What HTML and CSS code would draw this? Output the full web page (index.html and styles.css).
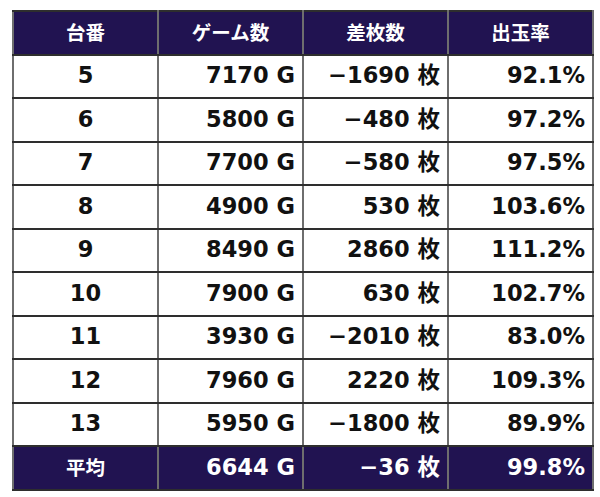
FILE: index.html
```html
<!DOCTYPE html>
<html lang="ja">
<head>
<meta charset="utf-8">
<link rel="stylesheet" href="styles.css">
</head>
<body>
<div class="wrap">
<table class="data">
<colgroup><col><col><col><col></colgroup>
<thead>
<tr><th>台番</th><th>ゲーム数</th><th>差枚数</th><th>出玉率</th></tr>
</thead>
<tbody>
<tr><td class="c">5</td><td>7170 G</td><td>−1690 枚</td><td>92.1%</td></tr>
<tr><td class="c">6</td><td>5800 G</td><td>−480 枚</td><td>97.2%</td></tr>
<tr><td class="c">7</td><td>7700 G</td><td>−580 枚</td><td>97.5%</td></tr>
<tr><td class="c">8</td><td>4900 G</td><td>530 枚</td><td>103.6%</td></tr>
<tr><td class="c">9</td><td>8490 G</td><td>2860 枚</td><td>111.2%</td></tr>
<tr><td class="c">10</td><td>7900 G</td><td>630 枚</td><td>102.7%</td></tr>
<tr><td class="c">11</td><td>3930 G</td><td>−2010 枚</td><td>83.0%</td></tr>
<tr><td class="c">12</td><td>7960 G</td><td>2220 枚</td><td>109.3%</td></tr>
<tr><td class="c">13</td><td>5950 G</td><td>−1800 枚</td><td>89.9%</td></tr>
</tbody>
<tfoot>
<tr><th class="lbl">平均</th><td>6644 G</td><td>−36 枚</td><td>99.8%</td></tr>
</tfoot>
</table>
</div>
</body>
</html>
```
FILE: styles.css
```css
html, body {
  margin: 0;
  padding: 0;
  background: #ffffff;
}
.wrap {
  padding: 10px 0 0 12px;
}
.data {
  border-collapse: collapse;
  table-layout: fixed;
  width: 580px;
  font-family: "DejaVu Sans", "Noto Sans CJK JP", sans-serif;
  font-weight: bold;
  color: #111;
  border: 2px solid #6e6e6e;
}
.data col {
  width: 145px;
}
.data tr {
  height: 43.5px;
}
.data th,
.data td {
  border-left: 2px solid #6e6e6e;
  border-right: 2px solid #6e6e6e;
  border-top: 2px solid #2e2e2e;
  border-bottom: 2px solid #2e2e2e;
  padding: 0 7px 2px 0;
  text-align: right;
  font-size: 22.5px;
  line-height: 1;
  white-space: nowrap;
}
.data thead th,
.data tfoot th {
  background: #211351;
  color: #ffffff;
  text-align: center;
  padding: 0 0 2px 0;
  font-family: "Noto Sans CJK JP", sans-serif;
  font-size: 19.5px;
  font-weight: bold;
}
.data tfoot td {
  background: #211351;
  color: #ffffff;
}
.data td.c {
  text-align: center;
  padding: 0 0 2px 0;
}
```
